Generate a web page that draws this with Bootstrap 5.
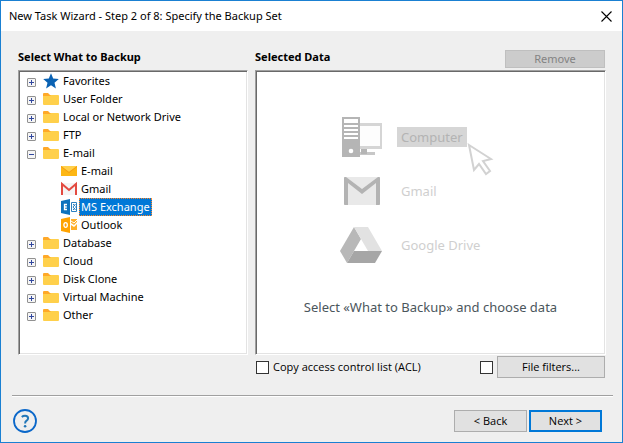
<!DOCTYPE html>
<html lang="en">
<head>
<meta charset="utf-8">
<meta name="viewport" content="width=device-width, initial-scale=1">
<title>New Task Wizard</title>
<link href="https://cdn.jsdelivr.net/npm/bootstrap@5.3.0/dist/css/bootstrap.min.css" rel="stylesheet">
<style>
body{font-family:"Noto Sans","Open Sans",sans-serif;font-size:11px;line-height:18px;color:#000;background:#efefef}
.wizard{min-height:100vh;border:1px solid #1a80d2}
.titlebar{height:30px;padding:0 6px 0 8px}
.titlebar h1{font-size:11px;line-height:18px}
.close-x{width:20px;height:20px}
.panes{display:grid;grid-template-columns:230fr 351fr;column-gap:7px;grid-template-rows:39px 1fr;padding:0 16px 0 17px}
.pane-head{padding-bottom:2px}
.pane-head h2{font-size:11px;line-height:18px;font-weight:700;margin:0 0 2px}
.sunken{background:#fff;border:1px solid;border-color:#a0a0a0 #fff #fff #a0a0a0;box-shadow:inset 1px 1px #696969,inset -1px -1px #e3e3e3}
.win-btn{--bs-btn-padding-x:0;--bs-btn-padding-y:0;--bs-btn-font-size:11px;--bs-btn-line-height:16px;--bs-btn-border-radius:0;--bs-btn-color:#000;--bs-btn-bg:#e1e1e1;--bs-btn-border-color:#adadad;--bs-btn-hover-bg:#e5f1fb;--bs-btn-hover-border-color:#0078d7;--bs-btn-disabled-color:#838383;--bs-btn-disabled-bg:#ccc;--bs-btn-disabled-border-color:#bfbfbf;--bs-btn-disabled-opacity:1;height:22px}
.btn-remove{width:100px;height:18px;margin-right:1px}
.btn-filter{width:108px}
.btn-step{width:73px}
.btn-next{--bs-btn-border-color:#0078d7;border-width:2px}
.tree{padding:1px 8px}
.tree ul{padding-left:34px}
.tree-row{height:18px}
.expander{width:9px;height:9px;margin-right:7px;margin-top:3px}
.node-icon{width:16px;height:16px;margin-right:2px}
.node-label{padding:0 2px;line-height:18px}
.chosen{background:#0078d7;color:#fff;outline:1px dotted #ff8728;outline-offset:-1px}
.sample-list{row-gap:14px;padding:46px 0 0 84px;width:290px}
.sample{height:40px;font-size:13px;color:#cfcfcf}
.sample-icon{width:44px;height:42px;margin-right:13px}
.sample-label{padding:0 4px;line-height:20px}
.sample-on{background:#d6d6d6;color:#b3b3b3}
.pointer{left:211px;top:72px;width:27px;height:33px}
.hint{font-size:13px;line-height:20px;color:#4b565c;padding-top:32px;text-align:center}
.options{padding:1px 17px 17px 255px}
.box{width:13px;height:13px;margin:0;border:1px solid #333!important;border-radius:0!important}
.options label{margin-left:4px}
.options label,.options .btn,.wizard-foot .btn{font-family:"Open Sans","Noto Sans",sans-serif}
.rule{margin:0 9px 0 11px;border-top:1px solid #a0a0a0;border-bottom:1px solid #fff;height:2px}
.wizard-foot{padding:11px 20px 8px 11px}
.help{width:26px;height:26px}
</style>
<script src="https://cdn.jsdelivr.net/npm/bootstrap@5.3.0/dist/js/bootstrap.bundle.min.js"></script>
</head>
<body>
<svg class="d-none" aria-hidden="true">
<symbol id="folder" viewBox="0 0 16 16"><path d="M0 14V3q0-1 1-1h4l2 2h8v2H0z" fill="#ffa929"/><path d="M0 5h7l1-1h7q1 0 1 1v8q0 1-1 1H1q-1 0-1-1z" fill="#ffd04b"/></symbol>
<symbol id="plus" viewBox="0 0 9 9"><rect x=".5" y=".5" width="8" height="8" rx=".5" fill="#f5f5f5" stroke="#919191"/><path d="M2 4.500h5M4.500 2v5" stroke="#31479e"/></symbol>
<symbol id="minus" viewBox="0 0 9 9"><rect x=".5" y=".5" width="8" height="8" rx=".5" fill="#f5f5f5" stroke="#919191"/><path d="M2 4.500h5" stroke="#31479e"/></symbol>
</svg>
<main class="wizard d-flex flex-column">
<header class="titlebar bg-white d-flex align-items-center justify-content-between">
<h1 class="m-0 fw-normal">New Task Wizard - Step 2 of 8: Specify the Backup Set</h1>
<button type="button" class="close-x btn p-0 border-0 d-flex align-items-center justify-content-center" aria-label="Close"><svg width="11" height="11" viewBox="0 0 11 11"><path d="M.5.5l10 10M10.500.5l-10 10" stroke="#000" stroke-width="1.100"/></svg></button>
</header>
<section class="panes flex-grow-1">
<div class="pane-head d-flex align-items-end"><h2>Select What to Backup</h2></div>
<div class="pane-head d-flex align-items-end justify-content-between"><h2>Selected Data</h2><button type="button" class="btn win-btn btn-remove" disabled>Remove</button></div>
<nav class="sunken" aria-label="Backup sources">
<ul class="tree list-unstyled m-0">
<li class="tree-row d-flex align-items-center"><svg class="expander"><use href="#plus"/></svg><svg class="node-icon" viewBox="0 0 16 16"><path d="M8 .3l2.200 5.300 5.600.4-4.300 3.700 1.400 5.700L8 12.300l-4.900 3.100 1.400-5.700L.2 6l5.600-.4z" fill="#0a62b3"/></svg><span class="node-label">Favorites</span></li>
<li class="tree-row d-flex align-items-center"><svg class="expander"><use href="#plus"/></svg><svg class="node-icon"><use href="#folder"/></svg><span class="node-label">User Folder</span></li>
<li class="tree-row d-flex align-items-center"><svg class="expander"><use href="#plus"/></svg><svg class="node-icon"><use href="#folder"/></svg><span class="node-label">Local or Network Drive</span></li>
<li class="tree-row d-flex align-items-center"><svg class="expander"><use href="#plus"/></svg><svg class="node-icon"><use href="#folder"/></svg><span class="node-label">FTP</span></li>
<li><div class="tree-row d-flex align-items-center"><svg class="expander"><use href="#minus"/></svg><svg class="node-icon"><use href="#folder"/></svg><span class="node-label">E-mail</span></div>
<ul class="list-unstyled">
<li class="tree-row d-flex align-items-center"><svg class="node-icon" viewBox="0 0 16 16"><path d="M0 3h16v10H0z" fill="#fdb714"/><path d="M0 3h16L8 9z" fill="#ffd04b"/><path d="M0 3l8 6 8-6v1l-8 6-8-6z" fill="#f49b13"/></svg><span class="node-label">E-mail</span></li>
<li class="tree-row d-flex align-items-center"><svg class="node-icon" viewBox="0 0 16 16"><path d="M1 2h14v12H1z" fill="#f5f5f5"/><path d="M1 14V3l7 6 7-6v11" fill="none" stroke="#e34a40" stroke-width="2"/></svg><span class="node-label">Gmail</span></li>
<li class="tree-row d-flex align-items-center"><svg class="node-icon" viewBox="0 0 16 16"><path d="M0 2l9-2v16l-9-2z" fill="#0d72bd"/><path d="M6 5.500H3.500v5H6M3.500 8h2.300" fill="none" stroke="#fff" stroke-width="1.300"/><path d="M10.500 3.500h5v9h-5z" fill="#fff" stroke="#2b80c0"/><path d="M12 5l2.500 2.500M14.500 5L12 8M12 8l2.500 3M14.500 8.500L12 11" fill="none" stroke="#2b80c0"/></svg><span class="node-label chosen">MS Exchange</span></li>
<li class="tree-row d-flex align-items-center"><svg class="node-icon" viewBox="0 0 16 16"><path d="M0 2l9-2v16l-9-2z" fill="#ffa300"/><ellipse cx="4.600" cy="8" rx="1.700" ry="2.400" fill="none" stroke="#fff" stroke-width="1.300"/><path d="M10 2h6v3l-3 3-3-2zM10 8l3 2 3-3v6h-6z" fill="#ffb02b"/><path d="M10 4l3 2 3-3" fill="none" stroke="#fff"/></svg><span class="node-label">Outlook</span></li>
</ul></li>
<li class="tree-row d-flex align-items-center"><svg class="expander"><use href="#plus"/></svg><svg class="node-icon"><use href="#folder"/></svg><span class="node-label">Database</span></li>
<li class="tree-row d-flex align-items-center"><svg class="expander"><use href="#plus"/></svg><svg class="node-icon"><use href="#folder"/></svg><span class="node-label">Cloud</span></li>
<li class="tree-row d-flex align-items-center"><svg class="expander"><use href="#plus"/></svg><svg class="node-icon"><use href="#folder"/></svg><span class="node-label">Disk Clone</span></li>
<li class="tree-row d-flex align-items-center"><svg class="expander"><use href="#plus"/></svg><svg class="node-icon"><use href="#folder"/></svg><span class="node-label">Virtual Machine</span></li>
<li class="tree-row d-flex align-items-center"><svg class="expander"><use href="#plus"/></svg><svg class="node-icon"><use href="#folder"/></svg><span class="node-label">Other</span></li>
</ul>
</nav>
<div class="sunken">
<div class="sample-list position-relative d-flex flex-column">
<div class="sample d-flex align-items-center"><svg class="sample-icon" viewBox="0 0 44 42"><path d="M2 1h18v40H2z" fill="#b5b5b5"/><path d="M4 3h14v4H4zM4 9h14v2H4zM4 13h14v2H4zM4 17h14v2H4zM4 21h14v2H4z" fill="#fff"/><circle cx="11" cy="35" r="2.300" fill="#fff"/><path d="M20 7h22v26H20z" fill="#d5d5d5"/><path d="M20 10h20v20H20z" fill="#fdfdfd"/><path d="M20 36h15v3H20z" fill="#c7c7c7"/><path d="M21 33h6v5h-6z" fill="#b5b5b5"/></svg><span class="sample-label sample-on">Computer</span></div>
<div class="sample d-flex align-items-center"><svg class="sample-icon" viewBox="0 0 44 42"><path d="M4 7h36v28H4z" fill="#e9e9e9"/><path d="M4 8q0-1 1-1h1l16 12L38 7h1q1 0 1 1v26q0 1-1 1h-3V13L22 24 8 13v22H5q-1 0-1-1z" fill="#b3b3b3"/></svg><span class="sample-label">Gmail</span></div>
<div class="sample d-flex align-items-center"><svg class="sample-icon" viewBox="0 0 44 42"><path d="M14 3l7 12L7 39 0 27z" fill="#b8b8b8"/><path d="M14 3h14l14 24H28z" fill="#e2e2e2"/><path d="M14 27h28l-7 12H7z" fill="#a6a6a6"/></svg><span class="sample-label">Google Drive</span></div>
<svg class="pointer position-absolute" viewBox="0 0 27 33"><path d="M2 2l22 14-8 2 7 10-4 3-7-10-5 6z" fill="#fff" stroke="#d2d2d2" stroke-width="2"/></svg>
</div>
<p class="hint m-0">Select «What to Backup» and choose data</p>
</div>
</section>
<form>
<div class="options d-flex align-items-center">
<input type="checkbox" class="form-check-input box" id="acl"><label for="acl">Copy access control list (ACL)</label>
<input type="checkbox" class="form-check-input box ms-auto me-1" aria-label="Use file filters"><button type="button" class="btn win-btn btn-filter">File filters...</button>
</div>
<div class="rule"></div>
<footer class="wizard-foot d-flex align-items-center">
<button type="button" class="btn p-0 border-0 help d-flex" aria-label="Help"><svg width="26" height="26" viewBox="0 0 26 26"><circle cx="13" cy="13" r="11" fill="none" stroke="#0a67c9" stroke-width="1.800"/><path d="M9.800 9q1.200-1.200 3.300-1.200 3 0 3 2.500 0 1.300-1.500 2.400-1.500 1-1.500 2.800" fill="none" stroke="#2277b8" stroke-width="2"/><circle cx="13.100" cy="18.200" r="1.300" fill="#2277b8"/></svg></button>
<div class="d-flex ms-auto" style="gap:2px"><button type="button" class="btn win-btn btn-step">&lt; Back</button><button type="submit" class="btn win-btn btn-step btn-next">Next &gt;</button></div>
</footer>
</form>
</main>
</body>
</html>
